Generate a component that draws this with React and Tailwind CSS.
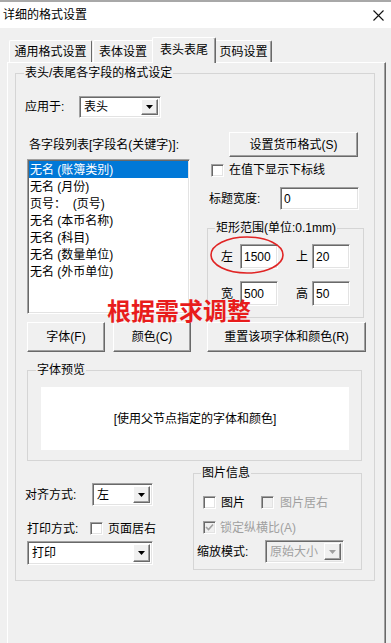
import React from 'react';

// classic win32 3d edges
const raised =
  'bg-[#f0f0f0] border border-t-white border-l-white border-r-[#696969] border-b-[#696969] shadow-[inset_-1px_-1px_0_#a0a0a0]';
const sunken =
  'border border-t-[#a0a0a0] border-l-[#a0a0a0] border-r-white border-b-white shadow-[inset_1px_1px_0_#696969,inset_-1px_-1px_0_#e3e3e3]';

function Combo({ value, className, disabled }) {
  return (
    <div className={`${sunken} ${disabled ? 'bg-[#f0f0f0]' : 'bg-white'} flex items-stretch p-[2px] ${className}`}>
      <div className={`flex-1 flex items-center pl-[2px] ${disabled ? 'text-[#a0a0a0]' : ''}`}>{value}</div>
      <div className={`w-[17px] ${raised} flex items-center justify-center`}>
        <svg width="7" height="4" viewBox="0 0 7 4">
          <polygon points="0,0 7,0 3.5,4" fill={disabled ? '#a0a0a0' : '#000'} />
        </svg>
      </div>
    </div>
  );
}

function Input({ value, className }) {
  return (
    <div className={`${sunken} bg-white flex items-center pl-[3px] ${className}`}>{value}</div>
  );
}

function Check({ checked, disabled }) {
  return (
    <span className={`w-[13px] h-[13px] shrink-0 ${sunken} ${disabled ? 'bg-[#f0f0f0]' : 'bg-white'} flex items-center justify-center`}>
      {checked && (
        <svg width="9" height="9" viewBox="0 0 9 9">
          <polyline points="1,4 3.5,6.5 8,1.5" fill="none" stroke={disabled ? '#a0a0a0' : '#000'} strokeWidth="1.6" />
        </svg>
      )}
    </span>
  );
}

function Button({ children, className }) {
  return <div className={`${raised} flex items-center justify-center ${className}`}>{children}</div>;
}

function Group({ title, className, legendClass, children }) {
  return (
    <fieldset className={`border border-[#d5d5d5] shrink-0 ${className}`}>
      <legend className={`px-[1px] leading-[14px] ${legendClass}`}>{title}</legend>
      {children}
    </fieldset>
  );
}

const FIELDS = [
  '无名 (账簿类别)',
  '无名 (月份)',
  '页号：  (页号)',
  '无名 (本币名称)',
  '无名 (科目)',
  '无名 (数量单位)',
  '无名 (外币单位)',
];

export default function App() {
  return (
    <div className="relative w-[391px] h-[643px] overflow-hidden bg-[#f0f0f0] text-[12px] leading-[14px] text-black font-['Liberation_Sans','Noto_Sans_CJK_SC',sans-serif]">
      {/* title bar */}
      <div className="h-[2px] bg-[#a8a8a8]" />
      <div className="h-[26px] bg-white flex items-center justify-between pl-[3px] pr-[7px]">
        <span className="text-[12px]">详细的格式设置</span>
        <svg width="11" height="11" viewBox="0 0 11 11">
          <path d="M0.5 0.5 L10.5 10.5 M10.5 0.5 L0.5 10.5" stroke="#111" strokeWidth="1.1" />
        </svg>
      </div>

      {/* tabs */}
      <div className="mt-[9px] ml-[9px] h-[26px] flex items-end">
        <div className="mb-[1px] w-[83px] h-[22px] border-t border-l border-r border-t-white border-l-white border-r-[#696969] rounded-t-[2px] flex items-center justify-center">
          通用格式设置
        </div>
        <div className="mb-[1px] ml-[1px] w-[59px] h-[22px] border-t border-l border-t-white border-l-white rounded-tl-[2px] flex items-center justify-center">
          表体设置
        </div>
        <div className="relative z-10 w-[64px] h-[26px] bg-[#f0f0f0] border-t border-l border-r border-t-white border-l-white border-r-[#696969] rounded-t-[2px] flex items-start justify-center pt-[5px] shadow-[inset_-1px_0_0_#a0a0a0]">
          表头表尾
        </div>
        <div className="mb-[1px] w-[56px] h-[22px] border-t border-r border-t-white border-r-[#696969] rounded-tr-[2px] flex items-center justify-center shadow-[inset_-1px_0_0_#a0a0a0]">
          页码设置
        </div>
      </div>

      {/* tab panel */}
      <div className="-mt-[1px] ml-[7px] w-[379px] h-[582px] border-l border-t border-r border-l-white border-t-white border-r-[#696969] shadow-[inset_-1px_0_0_#a0a0a0] pl-[7px] pt-[3px]">
        <Group title="表头/表尾各字段的格式设定" className="w-[360px] h-[515px]" legendClass="ml-[8px]">
          <div className="mt-[16px] ml-[9px] h-[22px] flex items-center">
            <span className="w-[54px]">应用于:</span>
            <Combo className="w-[82px] h-[22px]" value="表头" />
          </div>

          <div className="mt-[14px] ml-[11px] h-[186px] flex">
            <div className="w-[163px] shrink-0">
              <div className="mt-[6px] ml-[2px] leading-[14px]">各字段列表[字段名(关键字)]:</div>
              <div className={`mt-[7px] h-[155px] ${sunken} bg-white p-[1px]`}>
                {FIELDS.map((f, i) => (
                  <div
                    key={i}
                    className={`h-[17px] flex items-center pl-[1px] whitespace-pre ${i === 0 ? 'bg-[#0078d7] text-white' : ''}`}
                  >
                    {f}
                  </div>
                ))}
              </div>
            </div>

            <div className="ml-[17px] w-[158px] shrink-0">
              <Button className="ml-[22px] w-[129px] h-[25px]">设置货币格式(S)</Button>
              <div className="mt-[6px] ml-[4px] h-[14px] flex items-center gap-[5px]">
                <Check />
                <span>在值下显示下标线</span>
              </div>
              <div className="mt-[10px] ml-[2px] h-[23px] flex items-center">
                <span className="w-[71px]">标题宽度:</span>
                <Input className="w-[79px] h-[23px]" value="0" />
              </div>
              <Group title="矩形范围(单位:0.1mm)" className="mt-[11px] w-[157px] h-[97px]" legendClass="ml-[7px]">
                <div className="mt-[9px] pl-[13px] h-[25px] flex items-center">
                  <span className="w-[19px]">左</span>
                  <Input className="w-[38px] h-[25px]" value="1500" />
                  <span className="ml-[18px] w-[16px]">上</span>
                  <Input className="w-[38px] h-[25px]" value="20" />
                </div>
                <div className="mt-[12px] pl-[13px] h-[25px] flex items-center">
                  <span className="w-[19px]">宽</span>
                  <Input className="w-[38px] h-[25px]" value="500" />
                  <span className="ml-[18px] w-[16px]">高</span>
                  <Input className="w-[38px] h-[25px]" value="50" />
                </div>
              </Group>
            </div>
          </div>

          <div className="mt-[4px] ml-[11px] h-[30px] flex">
            <Button className="w-[78px] h-[30px]">字体(F)</Button>
            <Button className="ml-[8px] w-[78px] h-[30px]">颜色(C)</Button>
            <Button className="ml-[16px] w-[159px] h-[30px]">重置该项字体和颜色(R)</Button>
          </div>

          <Group title="字体预览" className="mt-[11px] ml-[11px] w-[335px] h-[98px]" legendClass="ml-[8px]">
            <div className="mt-[10px] ml-[13px] w-[308px] h-[63px] bg-white flex items-center justify-center">
              [使用父节点指定的字体和颜色]
            </div>
          </Group>

          <div className="ml-[9px] flex">
            <div className="w-[168px] shrink-0">
              <div className="mt-[22px] h-[23px] flex items-center">
                <span className="w-[67px]">对齐方式:</span>
                <Combo className="w-[61px] h-[23px]" value="左" />
              </div>
              <div className="mt-[16px] ml-[2px] h-[13px] flex items-center">
                <span className="w-[63px]">打印方式:</span>
                <Check />
                <span className="ml-[5px]">页面居右</span>
              </div>
              <Combo className="mt-[6px] ml-[2px] w-[126px] h-[24px]" value="打印" />
            </div>

            <Group title="图片信息" className="mt-[5px] w-[169px] h-[104px]" legendClass="ml-[7px]">
              <div className="mt-[16px] pl-[9px] h-[13px] flex items-center">
                <Check />
                <span className="ml-[5px]">图片</span>
                <span className="ml-[16px]">
                  <Check disabled />
                </span>
                <span className="ml-[6px] text-[#a0a0a0]">图片居右</span>
              </div>
              <div className="mt-[12px] pl-[9px] h-[13px] flex items-center">
                <Check checked disabled />
                <span className="ml-[4px] text-[#a0a0a0]">锁定纵横比(A)</span>
              </div>
              <div className="mt-[6px] pl-[3px] h-[23px] flex items-center">
                <span className="w-[68px]">缩放模式:</span>
                <Combo className="w-[79px] h-[23px]" value="原始大小" disabled />
              </div>
            </Group>
          </div>
        </Group>
      </div>

      {/* annotation overlays */}
      <svg className="absolute left-[209px] top-[234px]" width="78" height="42" viewBox="0 0 78 42">
        <ellipse cx="38" cy="21" rx="36" ry="18" fill="none" stroke="#e02424" strokeWidth="1.6" />
      </svg>
      <div className="absolute left-[107px] top-[297px] text-[24px] leading-[26px] font-bold text-[#e81c1c] font-['Noto_Sans_CJK_SC',sans-serif]">
        根据需求调整
      </div>
    </div>
  );
}
